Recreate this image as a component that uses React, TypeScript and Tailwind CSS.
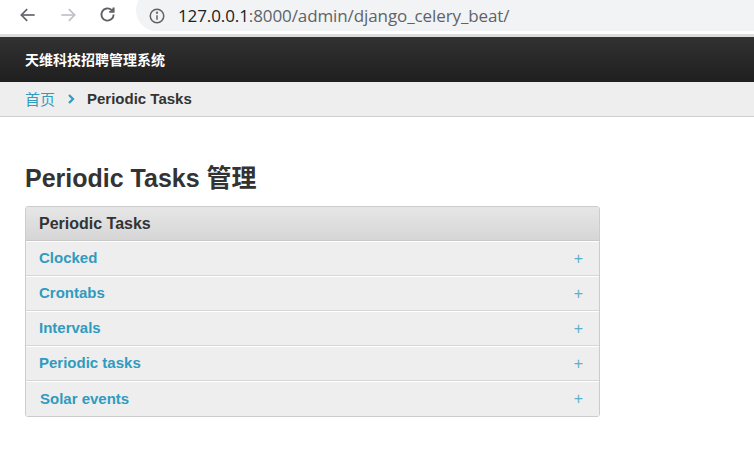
import React from 'react';

const models = ['Clocked', 'Crontabs', 'Intervals', 'Periodic tasks', 'Solar events'];

const BrowserBar: React.FC = () => (
  <div className="h-[37px] bg-white border-b-[3px] border-[#dcdcdc] flex items-center relative">
    {/* back */}
    <svg className="absolute left-[18px] top-[5px]" width="20" height="20" viewBox="0 0 24 24" fill="none" stroke="#5f6368" strokeWidth="2">
      <path d="M20 12H5" />
      <path d="M11 5l-7 7 7 7" />
    </svg>
    {/* forward */}
    <svg className="absolute left-[58px] top-[5px]" width="20" height="20" viewBox="0 0 24 24" fill="none" stroke="#bdc1c6" strokeWidth="2">
      <path d="M4 12h15" />
      <path d="M13 5l7 7-7 7" />
    </svg>
    {/* reload */}
    <svg className="absolute left-[97px] top-[4px]" width="21" height="21" viewBox="0 0 24 24" fill="none" stroke="#5f6368" strokeWidth="2.2">
      <path d="M19 12a7 7 0 1 1-2.05-4.95" />
      <path d="M19 4v5h-5" fill="#5f6368" />
    </svg>
    <div className="absolute left-[136px] top-[-10px] right-[-20px] h-[41px] rounded-full bg-[#f1f3f4] flex items-center pt-[10px] pl-[12px]">
      <svg width="18" height="18" viewBox="0 0 24 24" fill="none" stroke="#5f6368" strokeWidth="2">
        <circle cx="12" cy="12" r="9" />
        <path d="M12 11v6" />
        <circle cx="12" cy="7.5" r="0.6" fill="#5f6368" />
      </svg>
      <span className="ml-[12px] text-[17px] leading-none font-['Open_Sans','Liberation_Sans',sans-serif] text-[#5f6368] tracking-[-0.1px]">
        <span className="text-[#202124]">127.0.0.1</span>:8000/admin/django_celery_beat/
      </span>
    </div>
  </div>
);

export default function App() {
  return (
    <div className="w-[754px] h-[460px] bg-white overflow-hidden font-['Liberation_Sans','Noto_Sans_CJK_SC',sans-serif]">
      <BrowserBar />
      <div className="h-[45px] bg-gradient-to-b from-[#323232] to-[#1f1f1f] flex items-center px-[25px]">
        <span className="text-white font-bold text-[14px] font-['Noto_Sans_CJK_SC',sans-serif]">天维科技招聘管理系统</span>
      </div>
      <div className="h-[35px] bg-[#eeeeee] border-b border-[#cfcfcf] flex items-center px-[25px] text-[15px] font-bold">
        <a className="text-[#309bbf] font-['Noto_Sans_CJK_SC',sans-serif] font-normal">首页</a>
        <svg className="mx-[11px]" width="10" height="12" viewBox="0 0 10 12" fill="none" stroke="#309bbf" strokeWidth="2.2">
          <path d="M3 2l4 4-4 4" />
        </svg>
        <span className="text-[#333]">Periodic Tasks</span>
      </div>
      <div className="px-[25px] pt-[44px]">
        <h1 className="text-[25px] font-bold text-[#333] leading-[30px] mb-[13px]">
          Periodic Tasks <span className="font-['Noto_Sans_CJK_SC',sans-serif]">管理</span>
        </h1>
        <div className="w-[575px] border border-[#cccccc] rounded-[3px] overflow-hidden">
          <div className="h-[34px] bg-gradient-to-b from-[#e6e6e6] to-[#d6d6d6] border-b border-[#c8c8c8] flex items-center px-[13px]">
            <span className="text-[16px] font-bold text-[#333]">Periodic Tasks</span>
          </div>
          {models.map((m, i) => (
            <div
              key={m}
              className={`h-[35px] bg-[#eeeeee] flex items-center justify-between pl-[13px] pr-[16px] border-t border-white ${i < models.length - 1 ? 'border-b border-b-[#d6d6d6]' : ''}`}
            >
              <a className={`text-[15px] font-bold text-[#309bbf] ${m === 'Solar events' ? 'pl-[1px]' : ''}`}>{m}</a>
              <span className="text-[#5ab0cc] text-[16px] leading-none">+</span>
            </div>
          ))}
        </div>
      </div>
    </div>
  );
}
